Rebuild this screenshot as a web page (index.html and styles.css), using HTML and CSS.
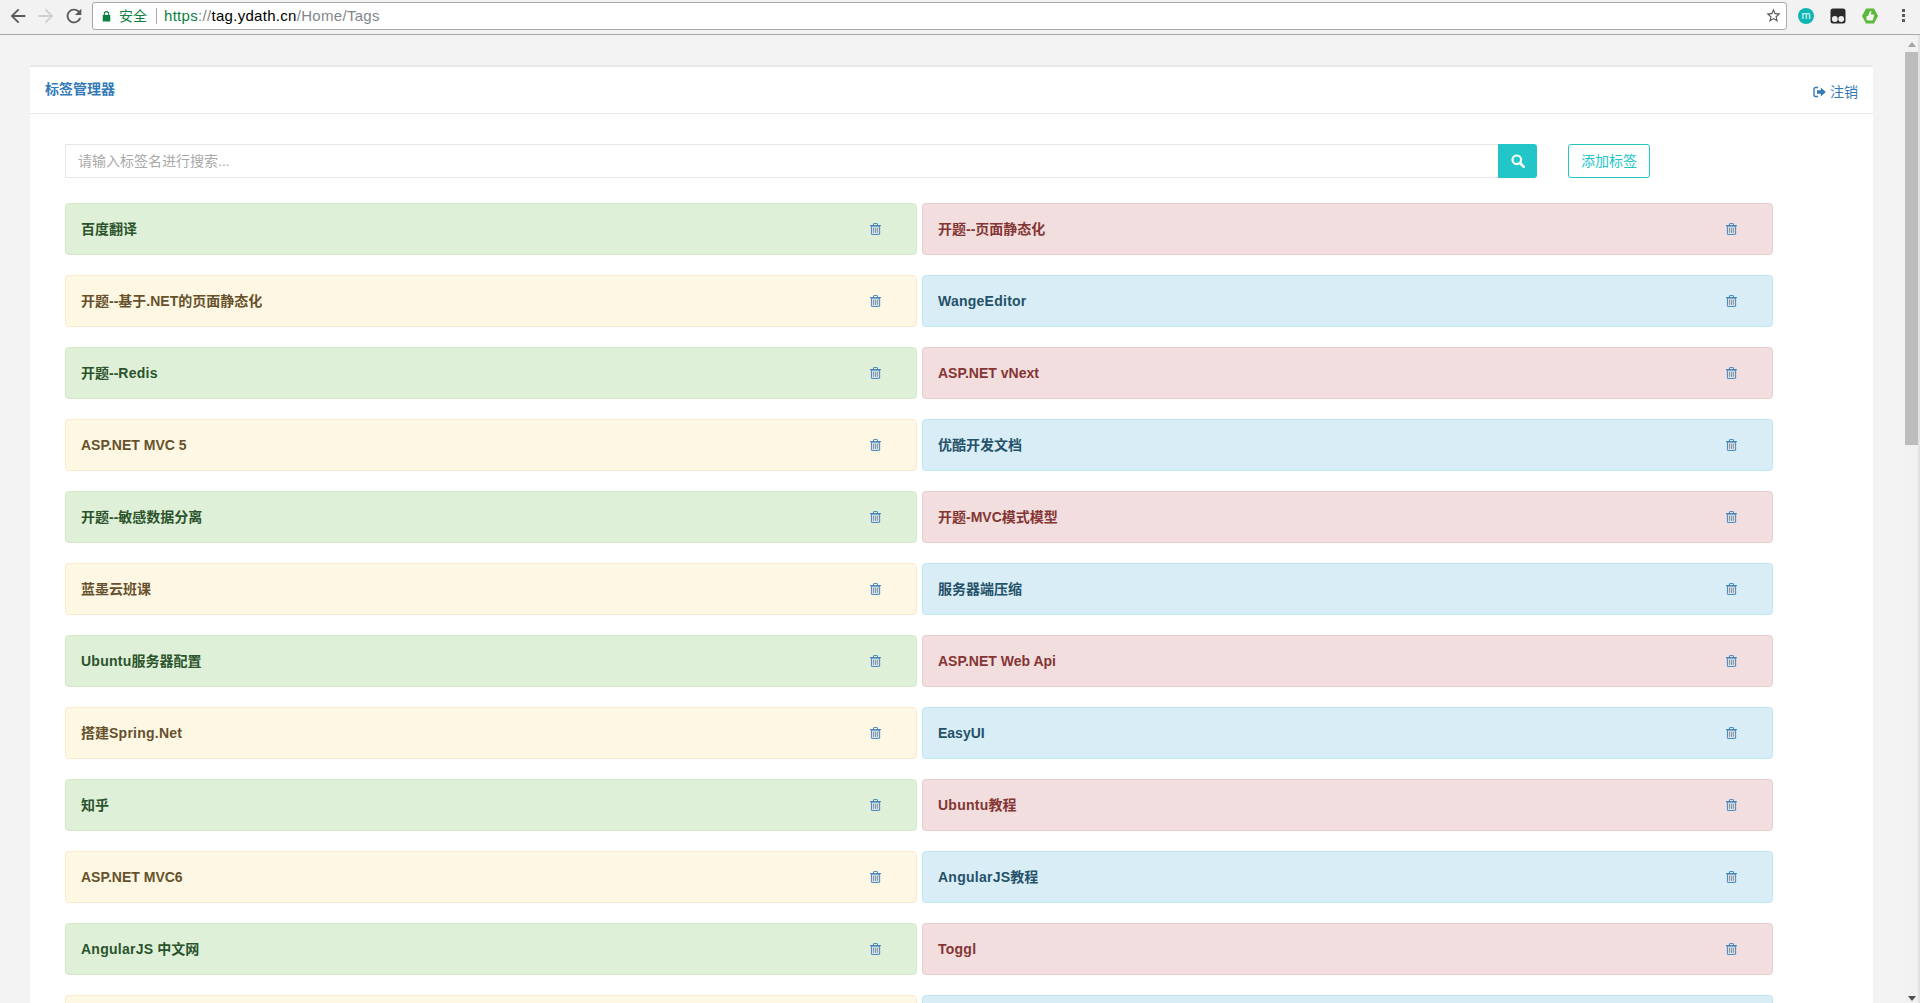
FILE: index.html
```html
<!DOCTYPE html>
<html lang="en">
<head>
    <meta charset="UTF-8">
    <meta name="viewport" content="width=device-width, initial-scale=1.0">
    <title>标签管理器</title>
    <link rel="stylesheet" href="styles.css">
</head>
<body>
    <svg class="defs" width="0" height="0">
        <symbol id="trash" viewBox="0 0 12 14" preserveAspectRatio="none">
            <path d="M1.5 3.5h9v9.2a.8.8 0 0 1-.8.8H2.3a.8.8 0 0 1-.8-.8z" fill="#d5dde6" stroke="#337ab7"/>
            <path d="M0 3h12" stroke="#337ab7"/>
            <path d="M3.8 3V1.2a.7.7 0 0 1 .7-.7h3a.7.7 0 0 1 .7.7V3" fill="none" stroke="#337ab7"/>
            <path d="M3.9 5.5v6M6 5.5v6M8.100 5.500v6" stroke="#7f8c9a"/>
        </symbol>
    </svg>

    <header class="toolbar">
        <svg class="nav-icon" viewBox="0 0 24 24"><path fill="#5a5a5a" d="M20 11H7.83l5.59-5.59L12 4l-8 8 8 8 1.41-1.41L7.83 13H20v-2z"/></svg>
        <svg class="nav-icon" viewBox="0 0 24 24"><path fill="#cfcfcf" d="M12 4l-1.41 1.41L16.17 11H4v2h12.17l-5.58 5.59L12 20l8-8z"/></svg>
        <svg class="nav-icon" viewBox="0 0 24 24"><path fill="#5a5a5a" d="M17.65 6.35A7.958 7.958 0 0 0 12 4c-4.42 0-7.99 3.58-7.99 8s3.57 8 7.99 8c3.73 0 6.84-2.55 7.73-6h-2.08A5.99 5.99 0 0 1 12 18c-3.31 0-6-2.69-6-6s2.69-6 6-6c1.66 0 3.14.69 4.22 1.78L13 11h7V4l-2.35 2.35z"/></svg>
        <div class="omnibox">
            <svg class="lock" viewBox="0 0 10 12"><path fill="#0b8043" d="M2 5V3.5a3 3 0 0 1 6 0V5h1.2v7H.8V5zm1.2 0h3.6V3.5a1.8 1.8 0 0 0-3.600 0z"/></svg>
            <span class="secure">安全</span>
            <span class="url"><span class="scheme">https</span><span class="dim">://</span><span class="host">tag.ydath.cn</span><span class="dim">/Home/Tags</span></span>
            <svg class="star" viewBox="0 0 24 24"><path fill="#5a5a5a" d="M22 9.24l-7.19-.62L12 2 9.19 8.63 2 9.24l5.46 4.73L5.82 21 12 17.27 18.18 21l-1.63-7.03L22 9.24zM12 15.4l-3.76 2.27 1-4.28-3.32-2.88 4.38-.38L12 6.1l1.71 4.04 4.38.38-3.32 2.88 1 4.28L12 15.4z"/></svg>
        </div>
        <div class="extensions">
            <span class="ext ext-m">m</span>
            <svg class="ext" viewBox="0 0 16 16"><rect x=".5" y=".5" width="15" height="15" rx="2.5" fill="#2b2b2b"/><circle cx="4.800" cy="11" r="2.900" fill="#eee"/><circle cx="11.200" cy="11" r="2.900" fill="#eee"/></svg>
            <svg class="ext" viewBox="0 0 16 16"><path d="M4 .5h8L16 8l-4 7.500H4L0 8z" fill="#5cb83c"/><path d="M4.500 8h1.600l2-5c.9-.4 1.400.4 1.200 1.300L9 6.500h2.200c.8 0 1.100.6.900 1.300l-1 4c-.1.5-.5.7-1 .7H6.500l-2-.5z" fill="#f1f6ee"/></svg>
            <span class="menu-dots"><i></i><i></i><i></i></span>
        </div>
    </header>

    <div class="window">
        <main class="page">
            <section class="panel">
                <div class="panel-head">
                    <a class="brand">标签管理器</a>
                    <a class="logout">
                        <svg class="logout-icon" viewBox="0 0 13 12"><path d="M5 1.500H2.500a1.500 1.500 0 0 0-1.500 1.500v6a1.500 1.500 0 0 0 1.500 1.500H5" fill="none" stroke="#337ab7" stroke-width="1.400"/><path d="M4 4.300h3.800V1.500L12.800 6l-5 4.500V7.700H4z" fill="#337ab7"/></svg>注销
                    </a>
                </div>
                <div class="panel-body">
                    <div class="search-row">
                        <div class="search-group">
                            <input class="search-input" type="text" placeholder="请输入标签名进行搜索...">
                            <button class="search-btn">
                                <svg class="search-icon" viewBox="0 0 14 14"><circle cx="5.800" cy="5.800" r="4.300" fill="none" stroke="#fff" stroke-width="2.200"/><path d="M9 9l3.800 3.800" stroke="#fff" stroke-width="2.600" stroke-linecap="round"/></svg>
                            </button>
                        </div>
                        <button class="add-btn"><span class="cjk">添加标签</span></button>
                    </div>
                    <div class="tags">
                        <div class="tag green"><b class="cjk">百度翻译</b><svg class="trash"><use href="#trash"/></svg></div>
                        <div class="tag red"><b class="cjk">开题--页面静态化</b><svg class="trash"><use href="#trash"/></svg></div>
                        <div class="tag yellow"><b class="cjk">开题--基于.NET的页面静态化</b><svg class="trash"><use href="#trash"/></svg></div>
                        <div class="tag blue"><b><span class="lat">WangeEditor</span></b><svg class="trash"><use href="#trash"/></svg></div>
                        <div class="tag green"><b class="cjk">开题--<span class="lat">Redis</span></b><svg class="trash"><use href="#trash"/></svg></div>
                        <div class="tag red"><b>ASP.NET vNext</b><svg class="trash"><use href="#trash"/></svg></div>
                        <div class="tag yellow"><b>ASP.NET MVC 5</b><svg class="trash"><use href="#trash"/></svg></div>
                        <div class="tag blue"><b class="cjk">优酷开发文档</b><svg class="trash"><use href="#trash"/></svg></div>
                        <div class="tag green"><b class="cjk">开题--敏感数据分离</b><svg class="trash"><use href="#trash"/></svg></div>
                        <div class="tag red"><b class="cjk">开题-MVC模式模型</b><svg class="trash"><use href="#trash"/></svg></div>
                        <div class="tag yellow"><b class="cjk">蓝墨云班课</b><svg class="trash"><use href="#trash"/></svg></div>
                        <div class="tag blue"><b class="cjk">服务器端压缩</b><svg class="trash"><use href="#trash"/></svg></div>
                        <div class="tag green"><b class="cjk"><span class="lat">Ubuntu</span>服务器配置</b><svg class="trash"><use href="#trash"/></svg></div>
                        <div class="tag red"><b>ASP.NET Web Api</b><svg class="trash"><use href="#trash"/></svg></div>
                        <div class="tag yellow"><b class="cjk">搭建<span class="lat">Spring.Net</span></b><svg class="trash"><use href="#trash"/></svg></div>
                        <div class="tag blue"><b>EasyUI</b><svg class="trash"><use href="#trash"/></svg></div>
                        <div class="tag green"><b class="cjk">知乎</b><svg class="trash"><use href="#trash"/></svg></div>
                        <div class="tag red"><b class="cjk"><span class="lat">Ubuntu</span>教程</b><svg class="trash"><use href="#trash"/></svg></div>
                        <div class="tag yellow"><b>ASP.NET MVC6</b><svg class="trash"><use href="#trash"/></svg></div>
                        <div class="tag blue"><b class="cjk"><span class="lat">AngularJS</span>教程</b><svg class="trash"><use href="#trash"/></svg></div>
                        <div class="tag green"><b class="cjk"><span class="lat">AngularJS</span> 中文网</b><svg class="trash"><use href="#trash"/></svg></div>
                        <div class="tag red"><b><span class="lat">Toggl</span></b><svg class="trash"><use href="#trash"/></svg></div>
                        <div class="tag yellow"></div>
                        <div class="tag blue"></div>
                    </div>
                </div>
            </section>
        </main>
        <aside class="scrollbar">
            <span class="arrow-up"></span>
            <span class="thumb"></span>
            <span class="arrow-down"></span>
        </aside>
    </div>
</body>
</html>
```

FILE: styles.css
```css
html, body {
    height: 100%;
    margin: 0;
    overflow: hidden;
}
body {
    display: flex;
    flex-direction: column;
    background-color: #f3f3f3;
    font-family: "Liberation Sans", "Noto Sans CJK SC", sans-serif;
    font-size: 14px;
    color: #676a6c;
}
.defs {
    display: none;
}

/* browser bar */
.toolbar {
    display: flex;
    align-items: center;
    flex: none;
    box-sizing: border-box;
    height: 35px;
    padding: 0 0 3px 7px;
    background-color: #f2f2f2;
    border-bottom: 1px solid #a9a9a9;
}
.nav-icon {
    width: 22px;
    height: 22px;
    margin-right: 6px;
    flex: none;
}
.omnibox {
    display: flex;
    align-items: center;
    box-sizing: border-box;
    width: 1695px;
    height: 28px;
    margin-left: 1px;
    padding: 0 4px 0 9px;
    background-color: #fff;
    border: 1px solid #a9a9a9;
    border-radius: 3px;
}
.lock {
    width: 9px;
    height: 12px;
    margin-right: 8px;
    flex: none;
}
.secure {
    padding-right: 9px;
    margin-right: 7px;
    border-right: 1px solid #a9a9a9;
    color: #0b8043;
    font-size: 14px;
    line-height: 16px;
}
.url {
    flex: 1;
    font-size: 15px;
    color: #000;
    letter-spacing: 0.3px;
}
.scheme {
    color: #0b8043;
}
.dim {
    color: #80868b;
}
.star {
    width: 17px;
    height: 17px;
    flex: none;
}
.extensions {
    display: flex;
    align-items: center;
    margin-left: 11px;
    gap: 16px;
}
.ext {
    display: block;
    width: 16px;
    height: 16px;
    flex: none;
}
.ext-m {
    border-radius: 50%;
    background-color: #0fb5b5;
    color: #e8ffff;
    font-size: 11px;
    line-height: 15px;
    text-align: center;
}
.menu-dots {
    display: flex;
    flex-direction: column;
    gap: 2px;
    width: 3px;
    margin-left: 8px;
}
.menu-dots i {
    display: block;
    width: 3px;
    height: 3px;
    background-color: #5a5a5a;
}

/* page */
.window {
    display: flex;
    flex: 1;
    min-height: 0;
}
.page {
    flex: 1;
    min-width: 0;
    padding: 30px 30px 0;
    overflow: hidden;
}
.panel {
    width: 1843px;
    background-color: #fff;
    border-top: 2px solid #e7eaec;
}
.panel-head {
    display: flex;
    justify-content: space-between;
    align-items: flex-start;
    height: 46px;
    padding: 0 15px;
    border-bottom: 1px solid #e7eaec;
}
.brand {
    padding-top: 12px;
    line-height: 20px;
    font-weight: bold;
    color: #337ab7;
}
.logout {
    display: flex;
    align-items: center;
    gap: 4px;
    padding-top: 15px;
    line-height: 20px;
    color: #337ab7;
}
.logout-icon {
    width: 13px;
    height: 12px;
}
.panel-body {
    padding: 30px 100px 0 35px;
}
.search-row {
    display: flex;
    margin-bottom: 25px;
}
.search-group {
    display: flex;
    width: 1472px;
    height: 34px;
}
.search-input {
    flex: 1;
    box-sizing: border-box;
    padding: 0 12px;
    border: 1px solid #e5e6e7;
    border-right: none;
    outline: none;
    font-family: inherit;
    font-size: 14px;
}
.search-input::placeholder {
    color: #a9a9a9;
}
.search-btn {
    display: flex;
    align-items: center;
    justify-content: center;
    width: 39px;
    padding: 0;
    background-color: #23c6c8;
    border: none;
    border-radius: 0 3px 3px 0;
}
.search-icon {
    width: 14px;
    height: 14px;
}
.add-btn {
    display: flex;
    align-items: center;
    justify-content: center;
    width: 82px;
    height: 34px;
    margin-left: 31px;
    padding: 0;
    background-color: #fff;
    border: 1px solid #23c6c8;
    border-radius: 3px;
    color: #23c6c8;
    font-family: inherit;
    font-size: 14px;
}
.tags {
    display: grid;
    grid-template-columns: 852px 851px;
    column-gap: 5px;
    row-gap: 20px;
}
.tag {
    display: flex;
    justify-content: space-between;
    align-items: center;
    box-sizing: border-box;
    height: 52px;
    padding: 0 35px 0 15px;
    border: 1px solid transparent;
    border-radius: 4px;
}
.tag b {
    font-weight: bold;
}
/* Noto sits a pixel lower than the original font */
.cjk {
    padding-bottom: 2px;
}
.lat {
    letter-spacing: 0.25px;
}
.trash {
    width: 11px;
    height: 12px;
}
.green {
    background-color: #dff0d8;
    border-color: #d6e9c6;
    color: #2b542c;
}
.red {
    background-color: #f2dede;
    border-color: #ebccd1;
    color: #843534;
}
.yellow {
    background-color: #fdf7e3;
    border-color: #faebcc;
    color: #66512c;
}
.blue {
    background-color: #d9edf7;
    border-color: #bce8f1;
    color: #245269;
}

/* fake scrollbar */
.scrollbar {
    display: flex;
    flex-direction: column;
    align-items: center;
    flex: none;
    box-sizing: border-box;
    width: 15px;
    padding-top: 7px;
    background-color: #f1f1f1;
    border-right: 2px solid #e2e2e2;
}
.arrow-up {
    width: 0;
    height: 0;
    border: 4px solid transparent;
    border-top: none;
    border-bottom: 5px solid #a3a3a3;
}
.thumb {
    width: 100%;
    height: 393px;
    margin-top: 5px;
    background-color: #bcbcbc;
}
.arrow-down {
    width: 0;
    height: 0;
    margin-top: auto;
    margin-bottom: 2px;
    border: 4px solid transparent;
    border-bottom: none;
    border-top: 5px solid #505050;
}
```
